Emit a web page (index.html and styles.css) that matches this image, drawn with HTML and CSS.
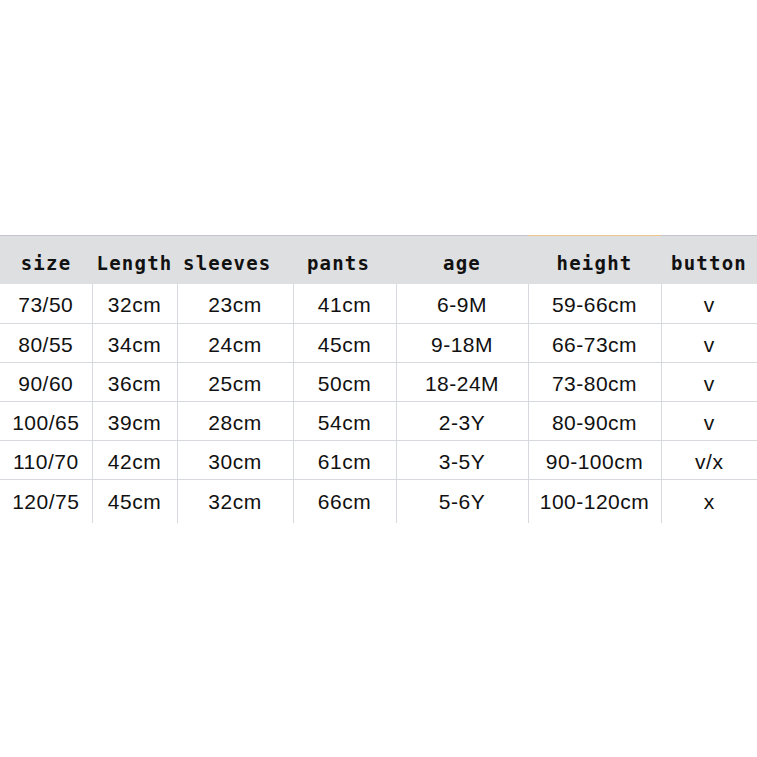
FILE: index.html
```html
<!DOCTYPE html>
<html>
<head>
<meta charset="utf-8">
<link rel="stylesheet" href="styles.css">
</head>
<body>
<table class="sizes">
  <colgroup>
    <col class="c1"><col class="c2"><col class="c3"><col class="c4"><col class="c5"><col class="c6"><col class="c7">
  </colgroup>
  <thead>
    <tr>
      <th>size</th><th>Length</th><th class="left">sleeves</th><th class="shift">pants</th><th>age</th><th class="accent">height</th><th>button</th>
    </tr>
  </thead>
  <tbody>
    <tr><td>73/50</td><td>32cm</td><td>23cm</td><td>41cm</td><td>6-9M</td><td>59-66cm</td><td>v</td></tr>
    <tr><td>80/55</td><td>34cm</td><td>24cm</td><td>45cm</td><td>9-18M</td><td>66-73cm</td><td>v</td></tr>
    <tr><td>90/60</td><td>36cm</td><td>25cm</td><td>50cm</td><td>18-24M</td><td>73-80cm</td><td>v</td></tr>
    <tr><td>100/65</td><td>39cm</td><td>28cm</td><td>54cm</td><td>2-3Y</td><td>80-90cm</td><td>v</td></tr>
    <tr><td>110/70</td><td>42cm</td><td>30cm</td><td>61cm</td><td>3-5Y</td><td>90-100cm</td><td>v/x</td></tr>
    <tr class="last"><td>120/75</td><td>45cm</td><td>32cm</td><td>66cm</td><td>5-6Y</td><td>100-120cm</td><td>x</td></tr>
  </tbody>
</table>
</body>
</html>
```
FILE: styles.css
```css
html, body {
  margin: 0;
  padding: 0;
  background: #ffffff;
}

.sizes {
  margin-top: 235px;
  width: 757px;
  table-layout: fixed;
  border-collapse: collapse;
  border-spacing: 0;
  color: #111111;
}

.c1 { width: 92px; }
.c2 { width: 85px; }
.c3 { width: 116px; }
.c4 { width: 103px; }
.c5 { width: 132px; }
.c6 { width: 133px; }
.c7 { width: 96px; }

.sizes th {
  height: 49px;
  padding: 7px 0 0 0;
  box-sizing: border-box;
  background: #dedfe0;
  box-shadow: inset 0 1px 0 #c3c6cc;
  font-family: "DejaVu Sans Mono", monospace;
  font-weight: bold;
  font-size: 19px;
  letter-spacing: 1.2px;
  text-align: center;
  white-space: nowrap;
  overflow: visible;
}

.sizes th.left {
  text-align: left;
  padding-left: 6px;
}

.sizes th.shift {
  padding-right: 12px;
}

.sizes th.accent {
  box-shadow: inset 0 1px 0 #f0c48e;
}

.sizes td {
  height: 39px;
  padding: 4px 0 0 0;
  box-sizing: border-box;
  border-bottom: 1px solid #d6d9de;
  border-left: 1px solid #d6d9de;
  font-family: "Liberation Sans", Arial, sans-serif;
  font-size: 21px;
  letter-spacing: 0.5px;
  text-align: center;
  white-space: nowrap;
}

.sizes td:first-child {
  border-left: none;
}

.sizes tr.last td {
  height: 44px;
  border-bottom: none;
  padding-top: 1px;
}
```
